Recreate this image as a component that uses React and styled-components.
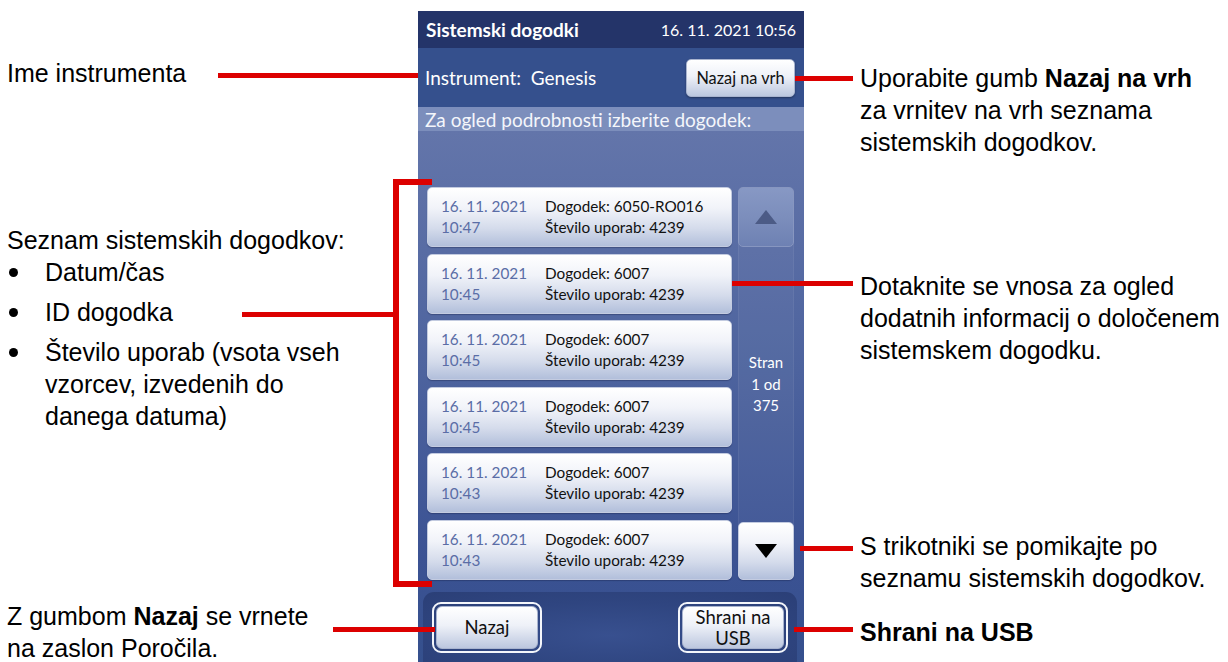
import React from 'react';
import styled, { createGlobalStyle } from 'styled-components';

const GlobalStyle = createGlobalStyle`
  html, body {
    margin: 0;
    padding: 0;
    background: #fff;
  }
  * {
    box-sizing: border-box;
  }
`;

const RED = '#dc0000';

const Page = styled.div`
  position: relative;
  width: 1228px;
  height: 662px;
  overflow: hidden;
  display: grid;
  grid-template-columns: 418px 386px 1fr;
  font-family: 'Liberation Sans', Arial, sans-serif;
  color: #000;
`;

// ---------- annotations ----------

const NoteColumn = styled.div`
  display: flex;
  flex-direction: column;
  padding-left: ${(p) => p.$indent}px;
  font-size: 25px;
  line-height: 32px;
  white-space: nowrap;
`;

const Note = styled.div`
  margin-top: ${(p) => p.$top || 0}px;
  b {
    font-weight: 700;
  }
`;

const Bullets = styled.ul`
  list-style: none;
  margin: 0;
  padding: 0;
  display: flex;
  flex-direction: column;
  gap: 8px;
`;

const Bullet = styled.li`
  position: relative;
  padding-left: 38px;

  &::before {
    content: '';
    position: absolute;
    left: 2px;
    top: 12px;
    width: 9px;
    height: 9px;
    border-radius: 50%;
    background: #000;
  }
`;

// ---------- device screen ----------

const Screen = styled.div`
  margin-top: 11px;
  display: flex;
  flex-direction: column;
  font-family: Lato, 'Noto Sans', sans-serif;
  background: #35508d;
`;

const TitleBar = styled.div`
  height: 37px;
  display: flex;
  align-items: center;
  justify-content: space-between;
  padding: 0 8px 0 8px;
  background: #243469;
  color: #fff;
  font-size: 16px;
`;

const Title = styled.span`
  font-weight: 700;
  font-size: 19px;
`;

const InstrumentRow = styled.div`
  height: 59px;
  display: flex;
  align-items: center;
  justify-content: space-between;
  padding: 0 9px 0 7px;
  background: #35508d;
  color: #fff;
  font-size: 19px;
`;

const SoftButton = styled.button`
  font-family: Lato, 'Noto Sans', sans-serif;
  color: #111;
  border: 1px solid #a9b4cf;
  border-radius: 5px;
  background: linear-gradient(to bottom, #ffffff 0%, #eef1f8 45%, #bcc7df 100%);
  box-shadow: 0 1px 2px rgba(0, 0, 0, 0.35);
  cursor: pointer;
  padding: 0;
`;

const TopButton = styled(SoftButton)`
  width: 109px;
  height: 38px;
  font-size: 16.3px;
`;

const Hint = styled.div`
  height: 24px;
  display: flex;
  align-items: center;
  padding-left: 7px;
  background: #7c8ebc;
  color: #f4f6fb;
  font-size: 19px;
`;

const Body = styled.div`
  flex: 1;
  display: flex;
  flex-direction: column;
  padding-top: 56px;
  background: linear-gradient(to bottom, #6375aa 0%, #4d639e 45%, #3b5293 80%, #35508d 100%);
`;

const ListArea = styled.div`
  display: flex;
  gap: 6px;
  padding: 0 10px 0 9px;
  height: 393px;
`;

const EventList = styled.div`
  flex: 1;
  display: flex;
  flex-direction: column;
  justify-content: space-between;
`;

const EventCard = styled.div`
  height: 60px;
  display: flex;
  align-items: center;
  padding-left: 13px;
  border-radius: 5px;
  border: 1px solid #c3cbe0;
  background: linear-gradient(to bottom, #ffffff 0%, #f1f3f9 35%, #d4dbeb 70%, #b2bfdb 100%);
  box-shadow: 0 1px 1px rgba(20, 30, 70, 0.35);
  font-size: 15.3px;
  line-height: 21px;
`;

const EventDate = styled.div`
  width: 104px;
  color: #5a6da6;
`;

const EventInfo = styled.div`
  color: #111;
`;

const ScrollColumn = styled.div`
  width: 56px;
  display: flex;
  flex-direction: column;
  border-radius: 5px;
  background: rgba(255, 255, 255, 0.04);
  box-shadow: inset 1px 0 0 rgba(255, 255, 255, 0.06), inset -1px 0 0 rgba(255, 255, 255, 0.06);
`;

const ArrowButton = styled.button`
  height: ${(p) => p.$h}px;
  display: flex;
  align-items: center;
  justify-content: center;
  padding: 0;
  border-radius: 5px;
  cursor: pointer;
  border: 1px solid ${(p) => (p.disabled ? '#8796c0' : '#c3cbe0')};
  background: ${(p) =>
    p.disabled
      ? 'linear-gradient(to bottom, #8798c4 0%, #7c8ebc 50%, #6e81b3 100%)'
      : 'linear-gradient(to bottom, #ffffff 0%, #f1f3f9 35%, #d4dbeb 70%, #b2bfdb 100%)'};
  box-shadow: ${(p) => (p.disabled ? 'none' : '0 1px 1px rgba(20, 30, 70, 0.35)')};
`;

const PageInfo = styled.div`
  flex: 1;
  display: flex;
  align-items: center;
  justify-content: center;
  text-align: center;
  color: #fff;
  font-size: 15px;
  line-height: 21.5px;
`;

const BottomBar = styled.div`
  flex: 1;
  margin: 12px 7px 0 5px;
  padding: 10px 9px 0 9px;
  display: flex;
  align-items: flex-start;
  justify-content: space-between;
  border-radius: 11px 11px 0 0;
  background: radial-gradient(ellipse at 50% 60%, #38508f 0%, #2f4580 55%, #2b3f77 100%);
`;

const RingButton = styled.div`
  width: 110px;
  height: 51px;
  padding: 2px;
  border: 2px solid #f4f6fb;
  border-radius: 9px;
`;

const RingInner = styled(SoftButton)`
  width: 100%;
  height: 100%;
  border-radius: 6px;
  font-size: 18.5px;
  line-height: 21px;
  box-shadow: none;
`;

// ---------- leader lines ----------

const Leaders = styled.svg`
  position: absolute;
  left: 0;
  top: 0;
  pointer-events: none;
`;

const events = [
  { date: '16. 11. 2021', time: '10:47', id: '6050-RO016' },
  { date: '16. 11. 2021', time: '10:45', id: '6007' },
  { date: '16. 11. 2021', time: '10:45', id: '6007' },
  { date: '16. 11. 2021', time: '10:45', id: '6007' },
  { date: '16. 11. 2021', time: '10:43', id: '6007' },
  { date: '16. 11. 2021', time: '10:43', id: '6007' },
];

const leaderRects = [
  [218, 73, 200, 5],
  [795, 76, 58, 5],
  [393, 179, 6, 408],
  [393, 179, 39, 6],
  [393, 581, 39, 6],
  [242, 312, 154, 5],
  [732, 281, 121, 5],
  [800, 546, 53, 5],
  [794, 627, 59, 5],
  [333, 627, 102, 5],
];

const Triangle = ({ up, color }) => (
  <svg width="24" height="16" viewBox="0 0 24 16">
    <polygon points={up ? '12,1 23,15 1,15' : '1,1 23,1 12,15'} fill={color} />
  </svg>
);

const App = () => (
  <>
    <GlobalStyle />
    <Page>
      <NoteColumn $indent={7}>
        <Note $top={57}>Ime instrumenta</Note>
        <Note $top={135}>Seznam sistemskih dogodkov:</Note>
        <Bullets>
          <Bullet>Datum/čas</Bullet>
          <Bullet>ID dogodka</Bullet>
          <Bullet>
            Število uporab (vsota vseh
            <br />
            vzorcev, izvedenih do
            <br />
            danega datuma)
          </Bullet>
        </Bullets>
        <Note $top={168}>
          Z gumbom <b>Nazaj</b> se vrnete
          <br />
          na zaslon Poročila.
        </Note>
      </NoteColumn>

      <Screen>
        <TitleBar>
          <Title>Sistemski dogodki</Title>
          <span>16. 11. 2021 10:56</span>
        </TitleBar>
        <InstrumentRow>
          <span>Instrument:&nbsp; Genesis</span>
          <TopButton>Nazaj na vrh</TopButton>
        </InstrumentRow>
        <Hint>Za ogled podrobnosti izberite dogodek:</Hint>
        <Body>
          <ListArea>
            <EventList>
              {events.map((e, i) => (
                <EventCard key={i}>
                  <EventDate>
                    {e.date}
                    <br />
                    {e.time}
                  </EventDate>
                  <EventInfo>
                    Dogodek: {e.id}
                    <br />
                    Število uporab: 4239
                  </EventInfo>
                </EventCard>
              ))}
            </EventList>
            <ScrollColumn>
              <ArrowButton $h={60} disabled>
                <Triangle up color="#4c5b86" />
              </ArrowButton>
              <PageInfo>
                Stran
                <br />
                1 od
                <br />
                375
              </PageInfo>
              <ArrowButton $h={58}>
                <Triangle color="#000" />
              </ArrowButton>
            </ScrollColumn>
          </ListArea>
          <BottomBar>
            <RingButton>
              <RingInner>Nazaj</RingInner>
            </RingButton>
            <RingButton>
              <RingInner>
                Shrani na
                <br />
                USB
              </RingInner>
            </RingButton>
          </BottomBar>
        </Body>
      </Screen>

      <NoteColumn $indent={56}>
        <Note $top={62}>
          Uporabite gumb <b>Nazaj na vrh</b>
          <br />
          za vrnitev na vrh seznama
          <br />
          sistemskih dogodkov.
        </Note>
        <Note $top={112}>
          Dotaknite se vnosa za ogled
          <br />
          dodatnih informacij o določenem
          <br />
          sistemskem dogodku.
        </Note>
        <Note $top={164}>
          S trikotniki se pomikajte po
          <br />
          seznamu sistemskih dogodkov.
        </Note>
        <Note $top={22}>
          <b>Shrani na USB</b>
        </Note>
      </NoteColumn>

      <Leaders width="1228" height="662">
        {leaderRects.map(([x, y, w, h], i) => (
          <rect key={i} x={x} y={y} width={w} height={h} fill={RED} />
        ))}
      </Leaders>
    </Page>
  </>
);

export default App;
